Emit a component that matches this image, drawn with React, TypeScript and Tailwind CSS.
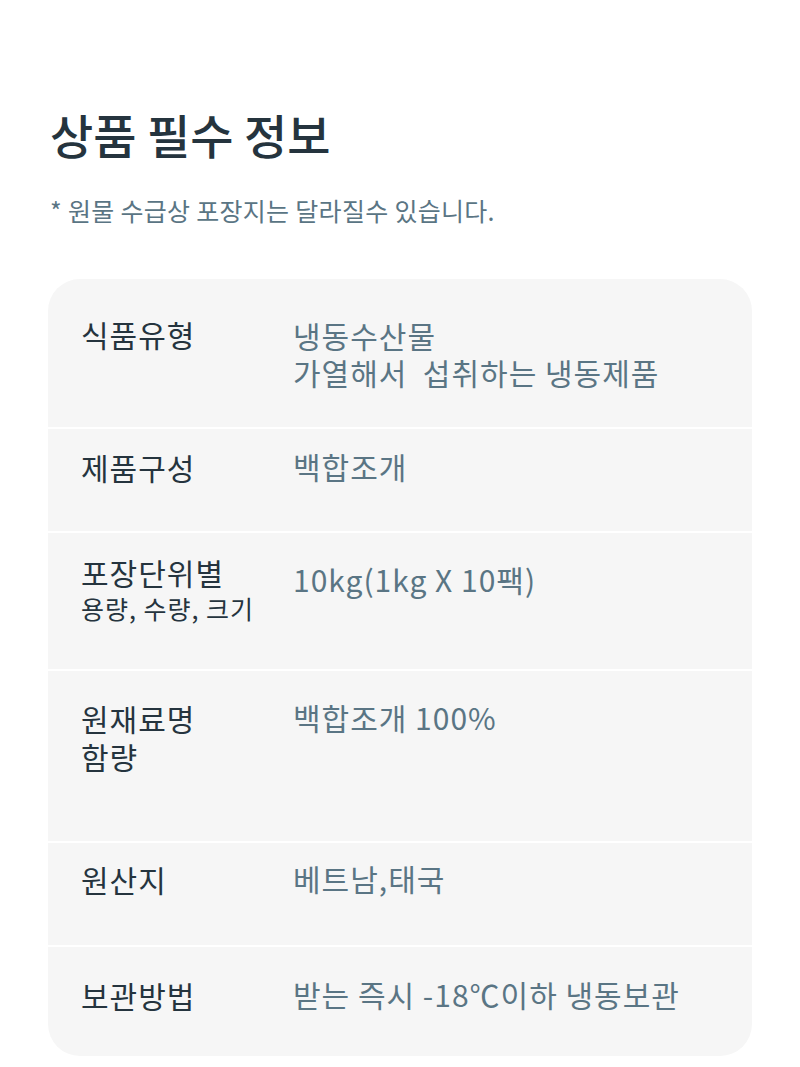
const rows = [
  { label: "식품유형", value: "냉동수산물\n가열해서  섭취하는 냉동제품", h: "h-[150px]", pt: "pt-[36px]", vpt: "pt-[2px]" },
  { label: "제품구성", value: "백합조개", h: "h-[104px]", pt: "pt-[19px]", vpt: "pt-0" },
  { label: "포장단위별", sub: "용량, 수량, 크기", value: "10kg(1kg X 10팩)", h: "h-[138px]", pt: "pt-[20px]", vpt: "pt-[8px]" },
  { label: "원재료명\n함량", value: "백합조개 100%", h: "h-[172px]", pt: "pt-[28px]", vpt: "pt-0" },
  { label: "원산지", value: "베트남,태국", h: "h-[104px]", pt: "pt-[17px]", vpt: "pt-0" },
  { label: "보관방법", value: "받는 즉시 -18℃이하 냉동보관", h: "h-[109px]", pt: "pt-[29px]", vpt: "pt-0" },
];

export default function App() {
  return (
    <div
      className="w-[800px] min-h-[1067px] bg-white px-[48px] pt-[102px]"
      style={{ fontFamily: '"Noto Sans CJK KR", "Noto Sans", sans-serif' }}
    >
      <h1 className="text-[47px] leading-[64px] font-medium text-[#25343e] pl-[2px]">
        상품 필수 정보
      </h1>
      <p className="mt-[28px] text-[25px] leading-[32px] text-[#5a7584] pl-[2px] tracking-[0.3px]">
        * 원물 수급상 포장지는 달라질수 있습니다.
      </p>

      <div className="mt-[53px] rounded-[32px] bg-[#f6f6f6] overflow-hidden">
        {rows.map((r, i) => (
          <div
            key={i}
            className={`flex ${r.h} ${r.pt} ${i < rows.length - 1 ? "border-b-2 border-white" : ""}`}
          >
            {/* label */}
            <div className="w-[245px] shrink-0 pl-[33px] text-[#25343e]">
              <div className="text-[30px] leading-[38px] tracking-[1px] whitespace-pre-line">
                {r.label}
              </div>
              {r.sub && (
                <div className="text-[25px] leading-[34px] tracking-[1px]">{r.sub}</div>
              )}
            </div>
            {/* value */}
            <div className={`${r.vpt} text-[#5a7584]`}>
              <div className="text-[30px] leading-[37px] tracking-[1px] whitespace-pre">
                {r.value}
              </div>
            </div>
          </div>
        ))}
      </div>
    </div>
  );
}
